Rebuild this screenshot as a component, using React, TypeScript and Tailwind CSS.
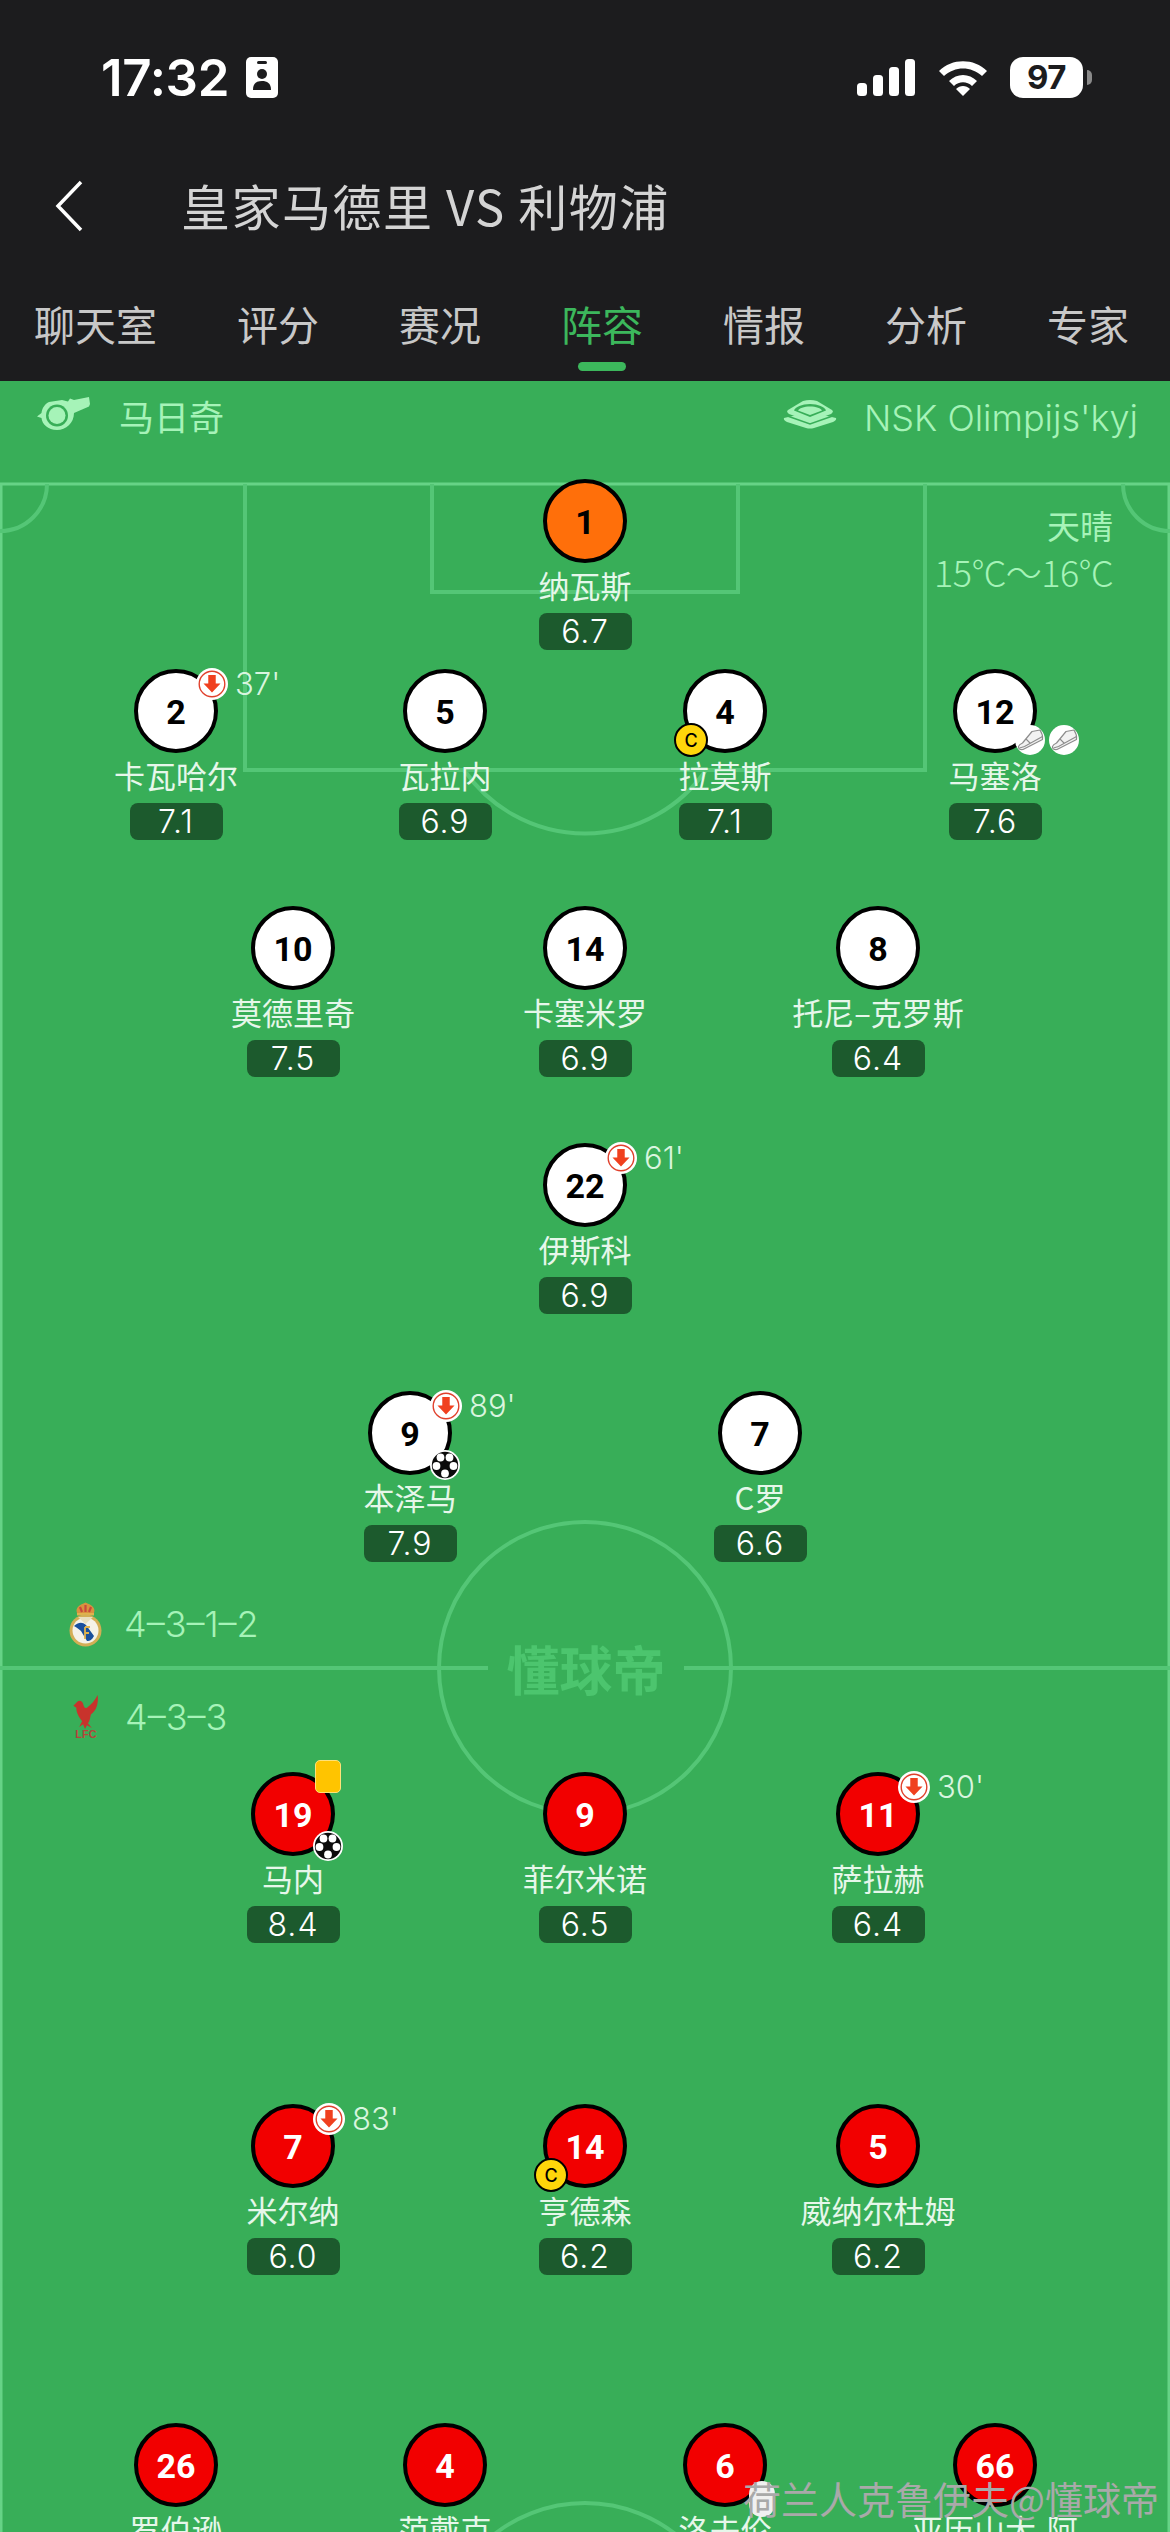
import React from "react";

const CJK = "font-['Noto_Sans_CJK_SC','Noto_Sans',sans-serif]";

type Player = {
  no: string;
  name: string;
  rating: string;
  x: number;
  y: number;
  team: "gk" | "home" | "away";
  sub?: string;
  captain?: boolean;
  goal?: boolean;
  card?: boolean;
  boots?: number;
};

const players: Player[] = [
  { no: "1", name: "纳瓦斯", rating: "6.7", x: 585, y: 521, team: "gk" },
  { no: "2", name: "卡瓦哈尔", rating: "7.1", x: 176, y: 711, team: "home", sub: "37'" },
  { no: "5", name: "瓦拉内", rating: "6.9", x: 445, y: 711, team: "home" },
  { no: "4", name: "拉莫斯", rating: "7.1", x: 725, y: 711, team: "home", captain: true },
  { no: "12", name: "马塞洛", rating: "7.6", x: 995, y: 711, team: "home", boots: 2 },
  { no: "10", name: "莫德里奇", rating: "7.5", x: 293, y: 948, team: "home" },
  { no: "14", name: "卡塞米罗", rating: "6.9", x: 585, y: 948, team: "home" },
  { no: "8", name: "托尼–克罗斯", rating: "6.4", x: 878, y: 948, team: "home" },
  { no: "22", name: "伊斯科", rating: "6.9", x: 585, y: 1185, team: "home", sub: "61'" },
  { no: "9", name: "本泽马", rating: "7.9", x: 410, y: 1433, team: "home", sub: "89'", goal: true },
  { no: "7", name: "C罗", rating: "6.6", x: 760, y: 1433, team: "home" },
  { no: "19", name: "马内", rating: "8.4", x: 293, y: 1814, team: "away", card: true, goal: true },
  { no: "9", name: "菲尔米诺", rating: "6.5", x: 585, y: 1814, team: "away" },
  { no: "11", name: "萨拉赫", rating: "6.4", x: 878, y: 1814, team: "away", sub: "30'" },
  { no: "7", name: "米尔纳", rating: "6.0", x: 293, y: 2146, team: "away", sub: "83'" },
  { no: "14", name: "亨德森", rating: "6.2", x: 585, y: 2146, team: "away", captain: true },
  { no: "5", name: "威纳尔杜姆", rating: "6.2", x: 878, y: 2146, team: "away" },
  { no: "26", name: "罗伯逊", rating: "", x: 176, y: 2465, team: "away" },
  { no: "4", name: "范戴克", rating: "", x: 445, y: 2465, team: "away" },
  { no: "6", name: "洛夫伦", rating: "", x: 725, y: 2465, team: "away" },
  { no: "66", name: "亚历山大-阿", rating: "", x: 995, y: 2465, team: "away" },
];

const tabs = ["聊天室", "评分", "赛况", "阵容", "情报", "分析", "专家"];

const SubIcon = () => (
  <svg viewBox="0 0 30 30" className="h-[32px] w-[32px]">
    <circle cx="15" cy="15" r="15" fill="#fff" />
    <circle cx="15" cy="15" r="12" fill="none" stroke="#e0402c" strokeWidth="1.3" />
    <path d="M11.5 6.5h7v8h4.5L15 23l-8-8.500h4.500z" fill="#f0401f" />
  </svg>
);

const BallIcon = () => (
  <svg viewBox="0 0 30 30" className="h-[30px] w-[30px]">
    <circle cx="15" cy="15" r="15" fill="#fff" />
    <circle cx="15" cy="15" r="13.200" fill="#0b0b0b" />
    <circle cx="10.500" cy="7.500" r="3.900" fill="#fff" />
    <circle cx="19.500" cy="7.500" r="3.900" fill="#fff" />
    <circle cx="6.500" cy="16" r="3.900" fill="#fff" />
    <circle cx="23.500" cy="16" r="3.900" fill="#fff" />
    <circle cx="15" cy="23.500" r="3.900" fill="#fff" />
  </svg>
);

const BootIcon = () => (
  <svg viewBox="0 0 30 30" className="h-[30px] w-[30px]">
    <circle cx="15" cy="15" r="15" fill="#fff" />
    <path
      d="M17 6.500l8-1.500c2 3 3 6 2.500 9.500L8 24.500c-3 .5-5-1-4.500-3 .3-1.500 2-2.500 4-3.500z"
      fill="#f2f2f2"
      stroke="#8d8d8d"
      strokeWidth="1.200"
      strokeLinejoin="round"
    />
    <path d="M4.500 23l5-1.500 18-10M11 14l4.500 4.500" fill="none" stroke="#8d8d8d" strokeWidth="1.100" />
  </svg>
);

const Whistle = () => (
  <svg viewBox="0 0 53 33" className="h-[33px] w-[53px] shrink-0">
    <path
      d="M12 5 L25 3 L31 4.500 L33 1.500 L37 3 L52 0 L53 7 L52 9.500 L37 16 C37 26 29 33 20 33 C11 33 5 27 4.500 21 L0 19.500 L4.500 16 C5 11 8 7 12 5z"
      fill="#a6f3b8"
    />
    <circle cx="20" cy="18.500" r="11" fill="#38ae58" />
    <circle cx="20" cy="18.500" r="8.500" fill="#a6f3b8" />
  </svg>
);

const Stadium = () => (
  <svg viewBox="0 0 54 29" className="h-[29px] w-[54px] shrink-0">
    <path d="M27 12 L53 18 Q54 20 50 22 L31 28 Q27 29 23 28 L4 22 Q0 20 1 18z" fill="#a6f3b8" />
    <path d="M3 15.500 L27 24 L51 15.500" fill="none" stroke="#38ae58" strokeWidth="1.500" />
    <path d="M20 1 Q27 -1 34 1 L49 10 Q51 12 48 14 L27 21.500 L6 14 Q3 12 5 10z" fill="#a6f3b8" />
    <path d="M27 4 C35 4 42 7 43 10.500 L27 17 L11 10.500 C12 7 19 4 27 4z" fill="#38ae58" />
    <path d="M27 6.500 C33 6.500 38 8.500 39 10.500 L27 15 L15 10.500 C16 8.500 21 6.500 27 6.500z" fill="#a6f3b8" />
  </svg>
);

const MadridCrest = () => (
  <svg viewBox="0 0 33 45" className="h-[45px] w-[33px] shrink-0">
    <path d="M8 11 C6 5 11 3 16.500 0.500 C22 3 27 5 25 11z" fill="#d9913f" />
    <path d="M8 11h17v2.500H8z" fill="#e0b24d" />
    <path d="M11 5l2 5M16.500 3v7M22 5l-2 5" stroke="#c9483c" strokeWidth="2.200" />
    <circle cx="16.500" cy="28.500" r="16" fill="#d3ae55" />
    <circle cx="16.500" cy="28.500" r="13" fill="#f5f2e8" />
    <path d="M5 24 C10 20 13 20 17 23 L25 34 C23 38 21 39 18 39 L12 29 C10 27 8 26 5 24z" fill="#1a4f9c" />
    <path d="M16 25h5M16 25v12M16 31h4" stroke="#e0b24d" strokeWidth="1.800" fill="none" />
    <path d="M9 15 L16.500 22 L24 15z" fill="#e9dfc0" />
  </svg>
);

const LiverpoolCrest = () => (
  <div className="flex w-[26px] shrink-0 flex-col items-center">
    <svg viewBox="0 0 26 36" className="h-[35px] w-[26px]">
      <path
        d="M25 0 C26 8 24 16 18 20 C17 24 17 27 15 29 L19 34 L14 31 L12 35 L10 30 L6 33 L9 27 C6 23 3 18 3 13 L0 11 L4 7 C6 5 9 6 10 9 C11 13 12 14 14 13 C18 10 22 6 25 0z"
        fill="#c8332c"
      />
    </svg>
    <span className="mt-[-1px] font-['Liberation_Sans',sans-serif] text-[11px] leading-[11px] font-bold text-[#b5443a]">
      LFC
    </span>
  </div>
);

const PitchLines = () => (
  <svg
    viewBox="0 381 1170 2151"
    className="absolute top-0 left-0 h-[2151px] w-[1170px]"
    fill="none"
    stroke="#54c676"
    strokeWidth="4"
  >
    <path d="M0 484H1170" stroke="#66d386" strokeWidth="3" />
    <path d="M1 484V2532M1169 484V2532" stroke="#66d386" strokeWidth="3" />
    <path d="M245 484V770H925V484" />
    <path d="M432 484V592H738V484" />
    <path d="M464 770A147 147 0 0 0 706 770" />
    <path d="M47 484A47 47 0 0 1 0 531M1123 484A47 47 0 0 0 1170 531" />
    <path d="M0 1668H1170" />
    <circle cx="585" cy="1668" r="146" />
    <circle cx="585" cy="2650" r="147" />
  </svg>
);

const PlayerNode = ({ p }: { p: Player }) => {
  const circle =
    p.team === "gk"
      ? "bg-[#ff6f0a] text-black"
      : p.team === "home"
        ? "bg-white text-black"
        : "bg-[#f20000] text-white";
  return (
    <div
      className="absolute flex w-[240px] flex-col items-center"
      style={{ left: p.x - 120, top: p.y - 42 - 381 }}
    >
      <div
        className={`relative flex h-[84px] w-[84px] items-center justify-center rounded-full border-[4px] border-black pt-[2px] font-['Roboto',sans-serif] text-[34px] font-bold ${circle}`}
      >
        {p.no}
        {p.sub && (
          <div className="absolute top-[-5px] left-[58px] flex items-center gap-[7px]">
            <SubIcon />
            <span className="font-['Inter',sans-serif] text-[31px] leading-[32px] font-light text-[#d9f5df]">
              {p.sub}
            </span>
          </div>
        )}
        {p.card && (
          <div className="absolute top-[-16px] left-[60px] h-[33px] w-[26px] rounded-[5px] border border-[#ffe27a] bg-[#ffc400]" />
        )}
        {p.goal && (
          <div className="absolute top-[55px] left-[58px]">
            <BallIcon />
          </div>
        )}
        {p.captain && (
          <div className="absolute top-[50px] left-[-13px] flex h-[34px] w-[34px] items-center justify-center rounded-full border-[2px] border-black bg-[#ffd60a] font-['Inter',sans-serif] text-[18px] font-medium text-black">
            C
          </div>
        )}
        {p.boots && (
          <div className="absolute top-[52px] left-[58px] flex gap-[4px]">
            <BootIcon />
            <BootIcon />
          </div>
        )}
      </div>
      <div className={`mt-[3px] text-[31px] leading-[38px] whitespace-nowrap text-[#e6f7ea] ${CJK}`}>{p.name}</div>
      {p.rating && (
        <div className="mt-[9px] flex h-[37px] w-[93px] items-center justify-center rounded-[8px] bg-[#1c5a2d] font-['Inter',sans-serif] text-[32px] font-light tracking-[1px] text-white">
          {p.rating}
        </div>
      )}
    </div>
  );
};

export default function App() {
  return (
    <div className={`flex h-[2532px] w-[1170px] flex-col overflow-hidden bg-[#1c1c1e] ${CJK}`}>
      {/* status bar */}
      <div className="relative flex h-[155px] shrink-0 items-start pt-[51px] pr-[87px] pl-[101px]">
        <span className="font-['Inter',sans-serif] text-[51px] leading-[54px] font-semibold tracking-[-0.300px] text-white">
          17:32
        </span>
        <svg viewBox="0 0 32 41" className="mt-[6px] ml-[17px] h-[41px] w-[32px]">
          <rect width="32" height="41" rx="5" fill="#fff" />
          <rect x="11" y="4" width="10" height="3" rx="1.500" fill="#1c1c1e" />
          <circle cx="16" cy="17" r="5" fill="#1c1c1e" />
          <path d="M7 33c0-7 4-9 9-9s9 2 9 9z" fill="#1c1c1e" />
        </svg>
        <svg viewBox="0 0 58 37" className="mt-[8px] ml-auto h-[37px] w-[58px]">
          <rect x="0" y="24" width="10" height="13" rx="3.500" fill="#fff" />
          <rect x="16" y="16" width="10" height="21" rx="3.500" fill="#fff" />
          <rect x="32" y="8" width="10" height="29" rx="3.500" fill="#fff" />
          <rect x="48" y="0" width="10" height="37" rx="3.500" fill="#fff" />
        </svg>
        <svg viewBox="0 0 50 38" className="mt-[7px] ml-[23px] h-[38px] w-[50px]">
          <path d="M1 13C14 0 36 0 49 13l-5 5C33 8 17 8 6 18z" fill="#fff" />
          <path d="M11 23c8-8 20-8 28 0l-5 5c-5-5-13-5-18 0z" fill="#fff" />
          <path d="M25 38l-7-7c4-4 10-4 14 0z" fill="#fff" />
        </svg>
        <div className="relative mt-[6px] ml-[22px] flex h-[41px] w-[73px] items-center justify-center rounded-[13px] bg-white font-['Inter',sans-serif] text-[33px] font-bold tracking-[-0.500px] text-[#1c1c1e]">
          97
          <div className="absolute top-[13px] right-[-9px] h-[15px] w-[5px] rounded-r-full bg-[#8a8a8a]" />
        </div>
      </div>

      {/* title */}
      <div className="flex h-[104px] shrink-0 items-center">
        <svg viewBox="0 0 28 52" className="mt-[-3px] ml-[55px] h-[52px] w-[28px]" fill="none" stroke="#fff" strokeWidth="3.500">
          <path d="M26 2L3 26l23 24" />
        </svg>
        <div className="mt-[-5px] ml-[98px] text-[49px] leading-[60px] tracking-[1.500px] text-[#d4d4d4]">皇家马德里 VS 利物浦</div>
      </div>

      {/* tabs */}
      <div className="flex h-[122px] shrink-0 flex-col">
        <div className="mt-[40px] flex gap-[80px] pl-[34px]">
          {tabs.map((t) => (
            <div
              key={t}
              className={`relative text-[41px] leading-[48px] whitespace-nowrap ${t === "阵容" ? "text-[#3cb75c]" : "text-[#c8c8c8]"}`}
            >
              {t}
              {t === "阵容" && (
                <div className="absolute top-[63px] left-[17px] h-[9px] w-[48px] rounded-full bg-[#3cb75c]" />
              )}
            </div>
          ))}
        </div>
      </div>

      {/* pitch */}
      <div className="relative h-[2151px] w-[1170px] shrink-0 overflow-hidden bg-[#38ae58]">
        <PitchLines />

        <div className="relative flex items-start justify-between pt-[8px] pr-[32px] pl-[37px] text-[#a6f3b8]">
          <div className="flex items-center gap-[29px]">
            <Whistle />
            <span className="mt-[5px] text-[35px] leading-[44px]">马日奇</span>
          </div>
          <div className="flex items-center gap-[27px]">
            <Stadium />
            <span className="mt-[7px] font-['Inter',sans-serif] text-[36px] leading-[44px] font-light">
              NSK Olimpijs'kyj
            </span>
          </div>
        </div>

        {/* weather */}
        <div className="absolute top-[121px] right-[57px] flex flex-col items-end text-[#a6f3b8]">
          <span className="text-[33px] leading-[46px]">天晴</span>
          <span className="text-[36px] leading-[46px] font-light tracking-[-0.500px]">15°C～16°C</span>
        </div>

        {/* formations */}
        <div className="absolute top-[1216px] left-[69px] flex items-center gap-[22px] text-[#a6f3b8]">
          <MadridCrest />
          <span className="font-['Inter',sans-serif] text-[36px] font-light">4–3–1–2</span>
        </div>
        <div className="absolute top-[1309px] left-[73px] flex items-center gap-[26px] text-[#a6f3b8]">
          <LiverpoolCrest />
          <span className="font-['Inter',sans-serif] text-[36px] font-light">4–3–3</span>
        </div>

        {/* centre logo */}
        <div className="absolute top-[1257px] left-[488px] flex h-[60px] w-[196px] items-center justify-center bg-[#38ae58] text-[53px] leading-[60px] font-bold text-[#4cc56e]">
          懂球帝
        </div>

        {players.map((p) => (
          <PlayerNode key={p.team + p.no + p.x} p={p} />
        ))}

        {/* watermark */}
        <div className="absolute top-[2094px] left-[743px] flex items-center text-[38px] leading-[46px] whitespace-nowrap text-[#a9a9a9]">
          <div className="absolute top-[6px] left-[6px] h-[36px] w-[26px] rounded-full bg-[#f0f0f0]" />
          <span className="relative">荷兰人克鲁伊夫@懂球帝</span>
        </div>
      </div>
    </div>
  );
}
